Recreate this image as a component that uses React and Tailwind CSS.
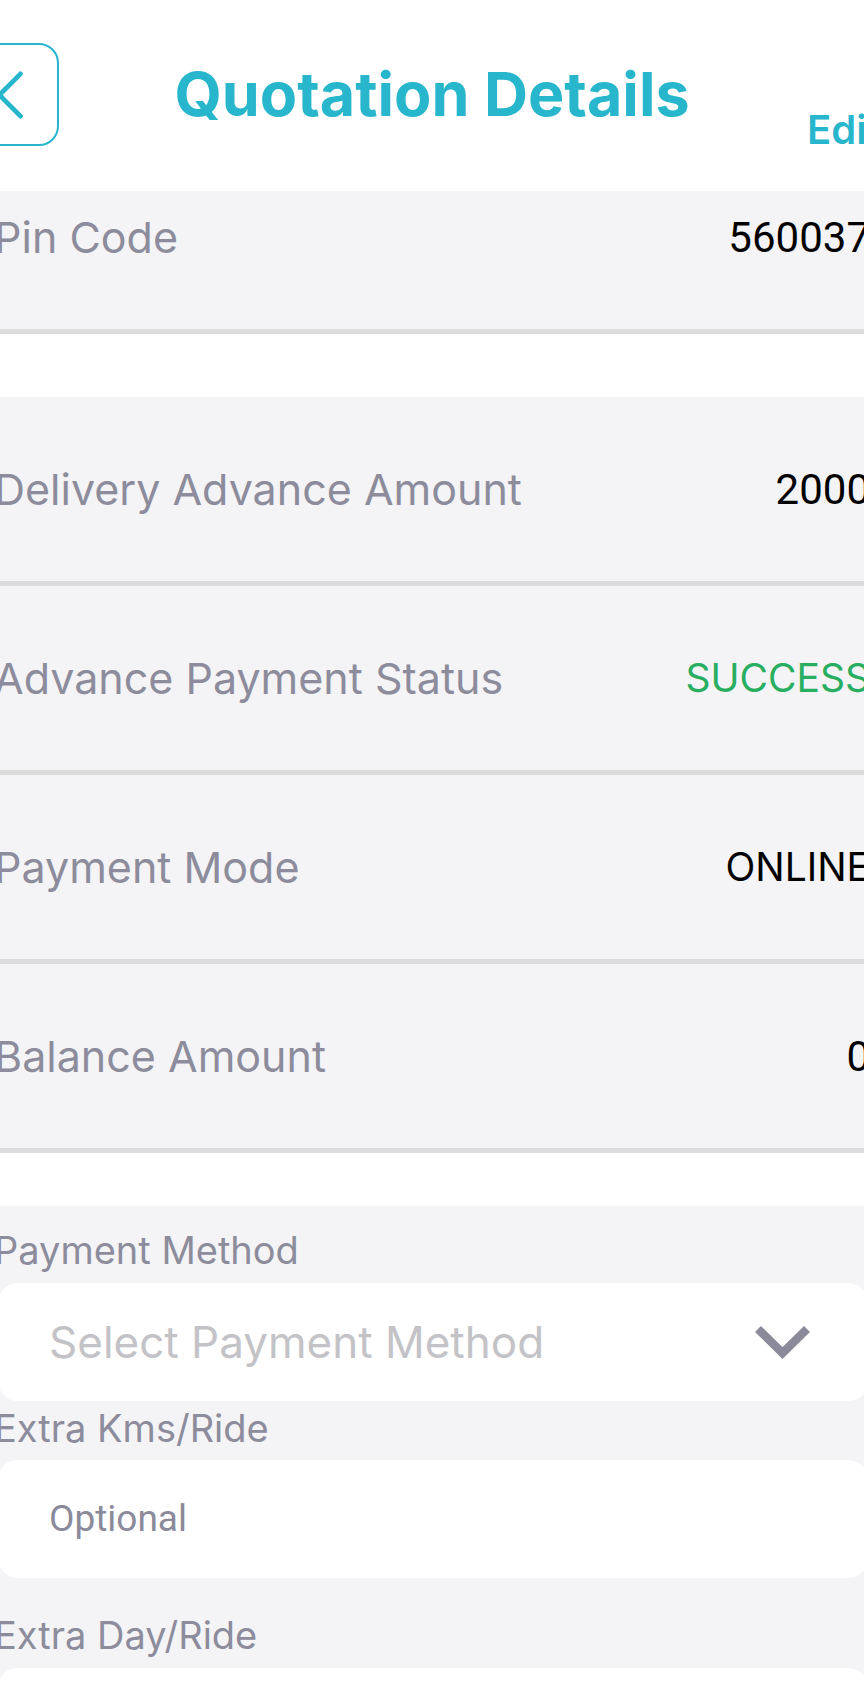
import React from 'react'

const rows = [
  { label: 'Delivery Advance Amount', value: '2000' },
  { label: 'Advance Payment Status', value: 'SUCCESS', tone: 'success' },
  { label: 'Payment Mode', value: 'ONLINE', tone: 'plain' },
  { label: 'Balance Amount', value: '0' },
]

function DetailRow({ label, value, tone, className = '' }) {
  return (
    <div
      className={
        'flex items-center justify-between h-[189px] bg-[#f4f4f6] border-b-[5px] border-[#dcdcdc] px-[2px] ' +
        className
      }
    >
      <span className="font-['Inter',sans-serif] text-[43px] text-[#8c8c9c] whitespace-nowrap">
        {label}
      </span>
      <span
        className={
          'whitespace-nowrap ' +
          (tone === 'success'
            ? "font-['Inter',sans-serif] text-[39px] text-[#27ae60]"
            : tone === 'plain'
            ? "font-['Inter',sans-serif] text-[39px] text-black"
            : "font-['Roboto',sans-serif] text-[42px] text-black")
        }
      >
        {value}
      </span>
    </div>
  )
}

function FieldLabel({ children, className = '' }) {
  return (
    <div
      className={
        "-ml-[4px] font-['Inter',sans-serif] text-[38px] leading-[54px] text-[#8c8c9c] whitespace-nowrap " +
        className
      }
    >
      {children}
    </div>
  )
}

export default function App() {
  return (
    <div className="w-[864px] h-[1684px] overflow-hidden bg-white">
      {/* Header */}
      <div className="-ml-[44px] w-[952px] h-[191px] pt-[43px] grid grid-cols-[103px_1fr_103px] items-start">
        <button className="w-[103px] h-[103px] rounded-[20px] border-2 border-[#27b6cc] flex items-center justify-center">
          <svg width="103" height="103" viewBox="0 0 103 103" fill="none">
            <polyline
              points="65,30 43,52 65,74"
              stroke="#27b6cc"
              strokeWidth="5"
              strokeLinecap="round"
              strokeLinejoin="round"
            />
          </svg>
        </button>
        <h1 className="h-[103px] flex items-center justify-center font-['Inter',sans-serif] font-bold text-[61px] text-[#27b6cc] whitespace-nowrap">
          Quotation Details
        </h1>
        <div className="h-[103px] flex items-end pl-[2px]">
          <span className="font-['Inter',sans-serif] font-semibold text-[40px] leading-none text-[#27b6cc] -mb-[4px]">
            Edit
          </span>
        </div>
      </div>

      {/* Detail rows */}
      <div className="-ml-[8px] w-[880px] overflow-hidden">
        <DetailRow label="Pin Code" value="560037" className="-mt-[46px]" />
        <div className="h-[63px] bg-white" />
        {rows.map((row) => (
          <DetailRow key={row.label} {...row} />
        ))}
        <div className="h-[53px] bg-white" />
      </div>

      {/* Form */}
      <div className="-ml-[8px] w-[882px] bg-[#f4f4f6] px-[6px] pt-[17px] pb-[40px]">
        <FieldLabel>Payment Method</FieldLabel>
        <div className="mt-[6px] h-[118px] rounded-[20px] bg-white flex items-center justify-between pl-[51px] pr-[57px]">
          <span className="font-['Inter',sans-serif] text-[44px] text-[#c3c3c7] whitespace-nowrap">
            Select Payment Method
          </span>
          <svg width="57" height="34" viewBox="0 0 57 34" fill="none">
            <polyline
              points="4,4 28.5,28 53,4"
              stroke="#8a8a9a"
              strokeWidth="8.5"
            />
          </svg>
        </div>
        <FieldLabel>Extra Kms/Ride</FieldLabel>
        <div className="mt-[5px] h-[118px] rounded-[20px] bg-white flex items-center pl-[51px]">
          <span className="font-['Roboto',sans-serif] text-[37px] text-[#8a8a9a]">
            Optional
          </span>
        </div>
        <FieldLabel className="mt-[30px]">Extra Day/Ride</FieldLabel>
        <div className="mt-[6px] h-[118px] rounded-[20px] bg-white" />
      </div>
    </div>
  )
}
